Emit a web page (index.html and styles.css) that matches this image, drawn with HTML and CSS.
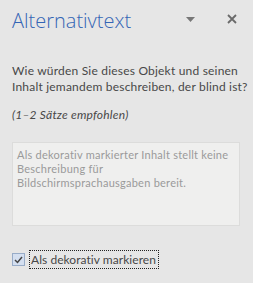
FILE: index.html
```html
<!DOCTYPE html>
<html lang="de">
<head>
<meta charset="utf-8">
<title>Alternativtext</title>
<link rel="stylesheet" href="styles.css">
</head>
<body>
<div class="pane">
  <header class="head">
    <h1 class="title">Alternativtext</h1>
    <button class="icon-btn menu" aria-label="Optionen">
      <svg width="9" height="5" viewBox="0 0 9 5"><polygon points="0,0 9,0 4.5,5" fill="#777"/></svg>
    </button>
    <button class="icon-btn close" aria-label="Schließen">
      <svg width="10" height="10" viewBox="0 0 10 10"><path d="M1 1 L9 9 M9 1 L1 9" stroke="#6a6a6a" stroke-width="1.8" fill="none"/></svg>
    </button>
  </header>
  <p class="question">Wie würden Sie dieses Objekt und seinen Inhalt jemandem beschreiben, der blind ist?</p>
  <p class="hint">(1–2 Sätze empfohlen)</p>
  <div class="textbox">Als dekorativ markierter Inhalt stellt keine Beschreibung für Bildschirmsprachausgaben bereit.</div>
  <label class="check">
    <span class="box"><svg width="9" height="8" viewBox="0 0 9 8"><path d="M1 4 L3.5 6.5 L8 1" stroke="#444" stroke-width="1.5" fill="none"/></svg></span>
    <span class="check-label">Als dekorativ markieren</span>
  </label>
</div>
</body>
</html>
```
FILE: styles.css
```css
html, body {
  margin: 0;
  padding: 0;
  background: #e6e6e6;
}
.pane {
  width: 253px;
  height: 283px;
  box-sizing: border-box;
  padding: 7px 2px 0 12px;
  font-family: Lato, "Open Sans", sans-serif;
  color: #484848;
}
.head {
  display: flex;
  align-items: flex-start;
  height: 28px;
  padding-right: 11px;
}
.title {
  flex: 1;
  margin: 0;
  font-family: "Open Sans", sans-serif;
  font-size: 20px;
  line-height: 28px;
  font-weight: 300;
  color: #3465b5;
  letter-spacing: 0;
}
.icon-btn {
  border: 0;
  background: none;
  padding: 0;
  display: flex;
}
.menu {
  margin-top: 10px;
  margin-right: 32px;
}
.close {
  margin-top: 7px;
  margin-right: 3px;
}
.question {
  margin: 28px 0 0;
  font-size: 12px;
  line-height: 16px;
  letter-spacing: 0.2px;
}
.hint {
  margin: 12px 0 0;
  font-size: 12px;
  line-height: 16px;
  font-style: italic;
  letter-spacing: 0.2px;
}
.textbox {
  margin-top: 19px;
  width: 228px;
  height: 84px;
  box-sizing: border-box;
  border: 1px solid #dcdcdb;
  background: #efefee;
  padding: 5px 4px;
  font-size: 11px;
  line-height: 14px;
  color: #9a9a9a;
  letter-spacing: 0.25px;
}
.check {
  display: flex;
  align-items: center;
  margin-top: 24px;
  gap: 4px;
}
.box {
  width: 11px;
  height: 11px;
  border: 1px solid #98acc8;
  background: #d4dff0;
  display: flex;
  align-items: center;
  justify-content: center;
}
.check-label {
  border: 1px dotted #222;
  padding: 0 2px 0 1px;
  font-size: 12px;
  line-height: 17px;
  letter-spacing: 0.05px;
}
```
